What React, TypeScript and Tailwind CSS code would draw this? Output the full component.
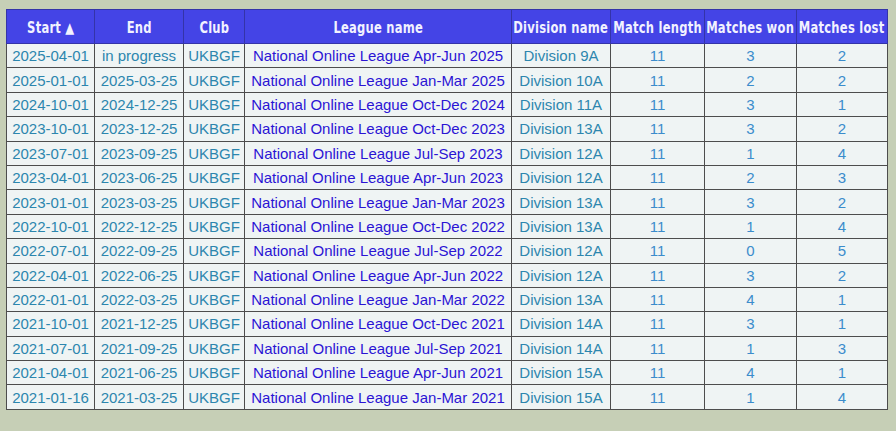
const rows: [string, string, string, string, number, number, number][] = [
  ["2025-04-01", "in progress", "National Online League Apr-Jun 2025", "Division 9A", 11, 3, 2],
  ["2025-01-01", "2025-03-25", "National Online League Jan-Mar 2025", "Division 10A", 11, 2, 2],
  ["2024-10-01", "2024-12-25", "National Online League Oct-Dec 2024", "Division 11A", 11, 3, 1],
  ["2023-10-01", "2023-12-25", "National Online League Oct-Dec 2023", "Division 13A", 11, 3, 2],
  ["2023-07-01", "2023-09-25", "National Online League Jul-Sep 2023", "Division 12A", 11, 1, 4],
  ["2023-04-01", "2023-06-25", "National Online League Apr-Jun 2023", "Division 12A", 11, 2, 3],
  ["2023-01-01", "2023-03-25", "National Online League Jan-Mar 2023", "Division 13A", 11, 3, 2],
  ["2022-10-01", "2022-12-25", "National Online League Oct-Dec 2022", "Division 13A", 11, 1, 4],
  ["2022-07-01", "2022-09-25", "National Online League Jul-Sep 2022", "Division 12A", 11, 0, 5],
  ["2022-04-01", "2022-06-25", "National Online League Apr-Jun 2022", "Division 12A", 11, 3, 2],
  ["2022-01-01", "2022-03-25", "National Online League Jan-Mar 2022", "Division 13A", 11, 4, 1],
  ["2021-10-01", "2021-12-25", "National Online League Oct-Dec 2021", "Division 14A", 11, 3, 1],
  ["2021-07-01", "2021-09-25", "National Online League Jul-Sep 2021", "Division 14A", 11, 1, 3],
  ["2021-04-01", "2021-06-25", "National Online League Apr-Jun 2021", "Division 15A", 11, 4, 1],
  ["2021-01-16", "2021-03-25", "National Online League Jan-Mar 2021", "Division 15A", 11, 1, 4],
];

const headers = [
  { label: "Start ▲", w: "w-[88px]" },
  { label: "End", w: "w-[89px]" },
  { label: "Club", w: "w-[61px]" },
  { label: "League name", w: "w-[267px]" },
  { label: "Division name", w: "w-[99px]" },
  { label: "Match length", w: "w-[94px]" },
  { label: "Matches won", w: "w-[92px]" },
  { label: "Matches lost", w: "w-[91px]" },
];

const td = "border border-[#4d4d4d] px-1 h-[24.4px] text-center";

export default function App() {
  return (
    <div className="w-[896px] h-[431px] bg-[#c6cfb6] pt-[9px] pl-[6px] font-['Liberation_Sans',Arial,sans-serif]">
      <table className="border-collapse table-fixed w-[881px] text-[15px] leading-none">
        <thead>
          <tr className="bg-[#4444e6] text-[#f2f2ff] h-[34px]">
            {headers.map((h) => (
              <th key={h.label} className={`${h.w} border border-[#3434a8] p-0 pt-[3px]`}>
                <div className="flex justify-center whitespace-nowrap">
                  {/* condensed look of the header face */}
                  <span className="shrink-0 scale-x-[0.77] font-['DejaVu_Sans',sans-serif] font-bold text-[15px] tracking-[0.3px]">
                    {h.label}
                  </span>
                </div>
              </th>
            ))}
          </tr>
        </thead>
        <tbody className="bg-[#eff4f4]">
          {rows.map((r) => (
            <tr key={r[0]}>
              <td className={`${td} text-[#2c86ae]`}>{r[0]}</td>
              <td className={`${td} text-[#2c86ae]`}>{r[1]}</td>
              <td className={`${td} text-[#2c86ae]`}>UKBGF</td>
              <td className={`${td} text-[#2b14d4] whitespace-nowrap`}>{r[2]}</td>
              <td className={`${td} text-[#2c86ae]`}>{r[3]}</td>
              <td className={`${td} text-[#3b8ccc]`}>{r[4]}</td>
              <td className={`${td} text-[#3b8ccc]`}>{r[5]}</td>
              <td className={`${td} text-[#3b8ccc]`}>{r[6]}</td>
            </tr>
          ))}
        </tbody>
      </table>
    </div>
  );
}
